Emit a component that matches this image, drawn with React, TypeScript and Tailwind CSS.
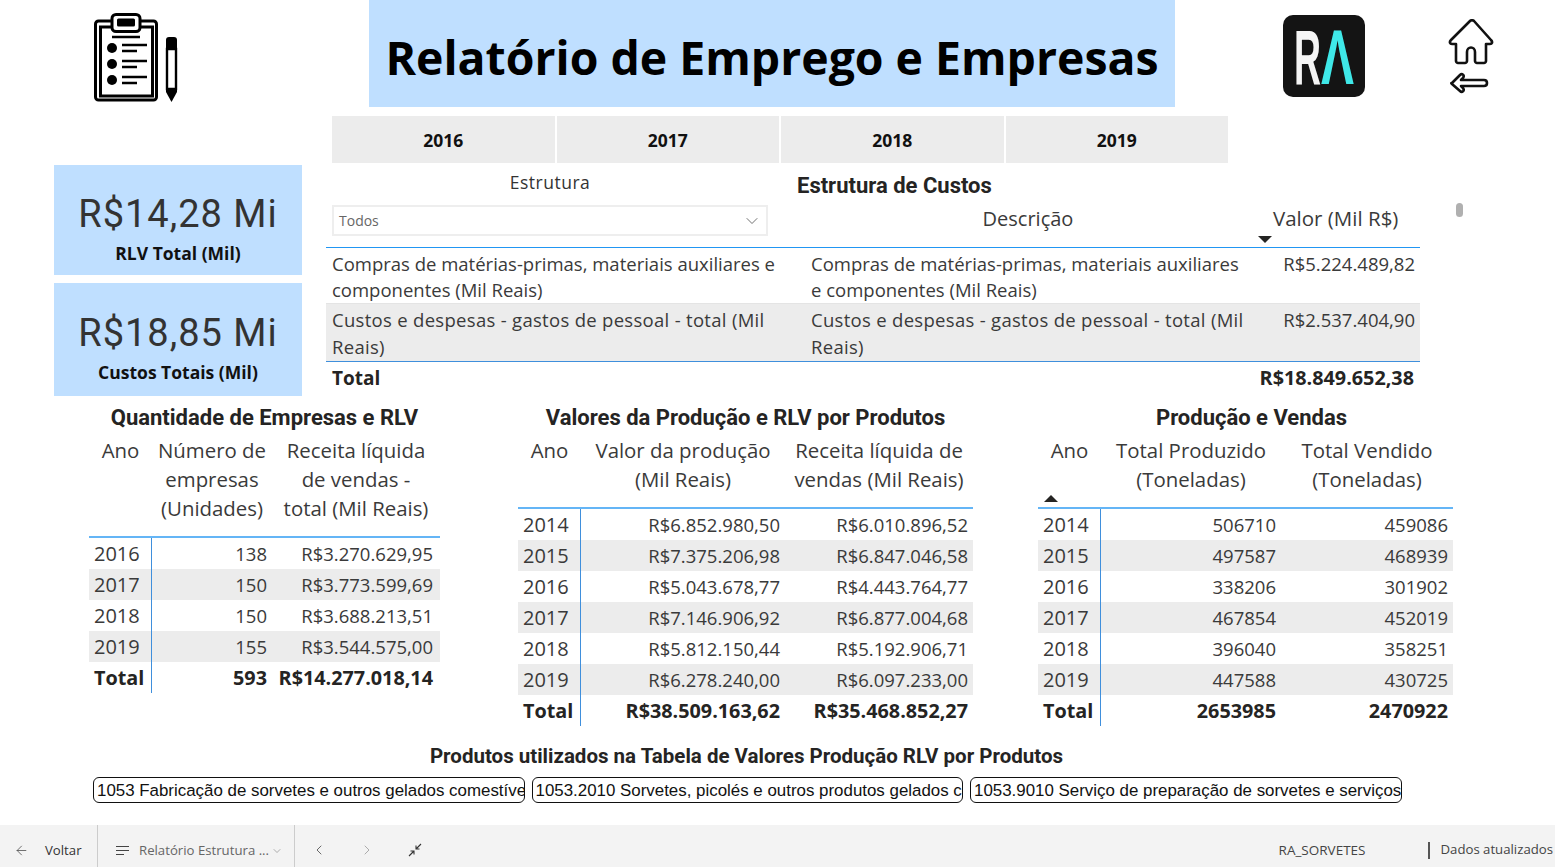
import { ArrowLeft, ChevronDown, ChevronLeft, ChevronRight } from "lucide-react"

const sans = "font-['Open_Sans',sans-serif]"
const din = "font-['Roboto',sans-serif]"

type TableProps = {
  title: string
  className: string
  titleClass?: string
  cols: string
  headH: string
  head: string[][]
  rows: string[][]
  total: string[]
  sortUp?: boolean
  lastPad?: string
}

function DataTable({ title, className, titleClass, cols, headH, head, rows, total, sortUp, lastPad }: TableProps) {
  return (
    <div className={`${className} shrink-0`}>
      <div className={`${din} h-10 pt-[2px] flex items-center justify-center text-[22px] font-bold text-[#252423] ${titleClass ?? ""}`}>{title}</div>
      <div className={`grid ${cols} ${headH} border-b-2 border-[#64b5f6] relative`}>
        {head.map((lines, i) => (
          <div key={i} className="text-center text-[20.400px] leading-[29px] text-[#3a3a3a]">
            {lines.map(l => (
              <div key={l} className="whitespace-nowrap">{l}</div>
            ))}
          </div>
        ))}
        {sortUp && (
          <div className="absolute left-[6px] bottom-[5px] w-0 h-0 border-x-[7px] border-x-transparent border-b-[7px] border-b-[#252423]" />
        )}
      </div>
      {rows.map((row, r) => (
        <div key={row[0]} className={`grid ${cols} h-[31px] items-center text-[18.5px] text-[#3a3a3a] ${r % 2 ? "bg-[#ececec]" : ""}`}>
          {row.map((cell, c) => (
            <div
              key={c}
              className={
                c === 0
                  ? "h-full flex items-center pl-[5px] text-[20px] border-r border-[#3f8fdc]"
                  : `text-right ${c === row.length - 1 && lastPad ? lastPad : "pr-[5px]"}`
              }
            >
              {cell}
            </div>
          ))}
        </div>
      ))}
      <div className={`grid ${cols} h-[31px] items-center text-[19.800px] font-bold text-[#252423]`}>
        {total.map((cell, c) => (
          <div
            key={c}
            className={
              c === 0
                ? "h-full flex items-center pl-[5px] border-r border-[#3f8fdc]"
                : `text-right whitespace-nowrap ${c === total.length - 1 && lastPad ? lastPad : "pr-[5px]"}`
            }
          >
            {cell}
          </div>
        ))}
      </div>
    </div>
  )
}

function ClipboardIcon() {
  return (
    <svg width="86" height="90" viewBox="0 0 86 90" fill="none" stroke="#000">
      <rect x="1.500" y="8" width="61" height="79" rx="3" strokeWidth="3" />
      <rect x="6.500" y="14" width="52" height="69" strokeWidth="3" />
      <rect x="18" y="1.500" width="28" height="17" rx="4" fill="#fff" strokeWidth="3" />
      <rect x="23" y="5.500" width="18" height="8" rx="1.500" fill="#000" stroke="none" />
      <path d="M18 24h28M28 32h25M28 38h15M28 48h25M28 54h15M28 64h25M28 70h15" strokeWidth="2.600" />
      <circle cx="18" cy="35" r="5" fill="#000" stroke="none" />
      <circle cx="18" cy="51" r="5" fill="#000" stroke="none" />
      <circle cx="18" cy="67" r="5" fill="#000" stroke="none" />
      <path d="M72 27c0-2 1-3 3-3h5c2 0 3 1 3 3v9H72z" fill="#000" stroke="none" />
      <path d="M73 36h9v40h-9z" strokeWidth="2.400" />
      <path d="M72 76h11v3l-5.500 10-5.500-10z" fill="#000" stroke="none" />
    </svg>
  )
}

function Logo() {
  return (
    <svg width="82" height="82" viewBox="0 0 82 82">
      <rect width="82" height="82" rx="10" fill="#141414" />
      <text x="11" y="69" fontSize="78" fontWeight="700" fontFamily="Liberation Sans" fill="#f5f5f5" textLength="27" lengthAdjust="spacingAndGlyphs">
        R
      </text>
      <text x="38" y="69" fontSize="78" fontWeight="700" fontFamily="Liberation Sans" fill="#3fe8e8" textLength="33" lengthAdjust="spacingAndGlyphs">
        Λ
      </text>
    </svg>
  )
}

function HomeBack() {
  return (
    <svg width="48" height="76" viewBox="0 0 48 76" fill="none" stroke="#111" strokeWidth="2.600" strokeLinejoin="round" strokeLinecap="round">
      <path d="M22 2 3 21c-2 2-1 4 1 4h4v17c0 1 1 2 2 2h7c1 0 2-1 2-2V33c0-6 8-6 8 0v9c0 1 1 2 2 2h7c1 0 2-1 2-2V25h4c2 0 3-2 1-4L26 2c-1-1-3-1-4 0z" />
      <path d="M4 64 12 56c2-2 5 0 3 3l-2 2h23c4 0 4 6 0 6H13l2 2c2 3-1 5-3 3l-8-7c-1-1-1-1 0-1z" />
    </svg>
  )
}

function Kpi({ value, label, h, top }: { value: string; label: string; h: string; top: string }) {
  return (
    <div className={`${h} bg-[#bfdfff] flex flex-col items-center`}>
      <div className={`${din} ${top} text-[38px] leading-[50px] tracking-[1px] text-[#333]`}>{value}</div>
      <div className="mt-[2px] text-[17.500px] leading-[24px] font-bold text-[#111]">{label}</div>
    </div>
  )
}

export default function App() {
  const years = ["2016", "2017", "2018", "2019"]

  const empresas = [
    ["2016", "138", "R$3.270.629,95"],
    ["2017", "150", "R$3.773.599,69"],
    ["2018", "150", "R$3.688.213,51"],
    ["2019", "155", "R$3.544.575,00"],
  ]
  const valores = [
    ["2014", "R$6.852.980,50", "R$6.010.896,52"],
    ["2015", "R$7.375.206,98", "R$6.847.046,58"],
    ["2016", "R$5.043.678,77", "R$4.443.764,77"],
    ["2017", "R$7.146.906,92", "R$6.877.004,68"],
    ["2018", "R$5.812.150,44", "R$5.192.906,71"],
    ["2019", "R$6.278.240,00", "R$6.097.233,00"],
  ]
  const producao = [
    ["2014", "506710", "459086"],
    ["2015", "497587", "468939"],
    ["2016", "338206", "301902"],
    ["2017", "467854", "452019"],
    ["2018", "396040", "358251"],
    ["2019", "447588", "430725"],
  ]

  return (
    <div className={`${sans} w-[1555px] h-[867px] flex flex-col bg-white overflow-hidden`}>
      {/* Header */}
      <div className="h-[107px] flex shrink-0">
        <div className="w-[369px] pl-[94px] pt-[13px]">
          <ClipboardIcon />
        </div>
        <div className="w-[806px] h-[107px] bg-[#bfdfff] flex items-center justify-center text-[46.400px] font-bold text-black pt-[8px]">
          Relatório de Emprego e Empresas
        </div>
        <div className="pl-[108px] pt-[15px]">
          <Logo />
        </div>
        <div className="pl-[83px] pt-[19px]">
          <HomeBack />
        </div>
      </div>

      {/* Year slicer */}
      <div className="mt-[9px] ml-[332px] flex gap-[2px] shrink-0">
        {years.map(y => (
          <div key={y} className="w-[222.500px] h-[47px] pt-[2px] bg-[#ececec] flex items-center justify-center text-[17.500px] font-bold text-[#111]">
            {y}
          </div>
        ))}
      </div>

      {/* KPIs + cost table */}
      <div className="mt-[2px] h-[231px] flex shrink-0">
        <div className="ml-[54px] w-[248px] flex flex-col gap-[8px]">
          <Kpi h="h-[110px]" top="mt-[24px]" value="R$14,28 Mi" label="RLV Total (Mil)" />
          <Kpi h="h-[113px]" top="mt-[25px]" value="R$18,85 Mi" label="Custos Totais (Mil)" />
        </div>

        <div className="ml-[24px] w-[1094px]">
          <div className="grid grid-cols-[479px_446px_169px] h-[83px] border-b border-[#2196f3]">
            <div className="pl-[6px]">
              <div className="h-[35px] w-[436px] flex items-center justify-center text-[17.500px] tracking-[0.5px] text-[#333]">Estrutura</div>
              <div className="mt-[5px] w-[436px] h-[31px] border-2 border-[#eeeeee] flex items-center justify-between pl-[5px] pr-[4px] text-[14px] text-[#666]">
                Todos
                <ChevronDown size={20} strokeWidth={1} className="text-[#555]" />
              </div>
            </div>
            <div>
              <div className={`${din} h-[40px] -ml-[8px] flex items-center text-[22px] font-bold text-[#252423]`}>Estrutura de Custos</div>
              <div className="text-center text-[20px] leading-[28px] text-[#3a3a3a]">Descrição</div>
            </div>
            <div className="relative pt-[39px] pl-[22px] text-[20.500px] leading-[28px] text-[#3a3a3a] whitespace-nowrap">
              Valor (Mil R$)
              <div className="absolute left-[7px] bottom-[4px] w-0 h-0 border-x-[7px] border-x-transparent border-t-[7px] border-t-[#252423]" />
            </div>
          </div>

          <div className="grid grid-cols-[479px_446px_169px] h-[56px] text-[18.500px] leading-[26px] text-[#3a3a3a] border-b border-[#e4e4e4]">
            <div className="pl-[6px] pt-[3px] pr-[2px]">Compras de matérias-primas, materiais auxiliares e componentes (Mil Reais)</div>
            <div className="pl-[6px] pt-[3px]">Compras de matérias-primas, materiais auxiliares e componentes (Mil Reais)</div>
            <div className="text-right pr-[5px] pt-[3px]">R$5.224.489,82</div>
          </div>
          <div className="grid grid-cols-[479px_446px_169px] h-[58px] bg-[#ececec] text-[18.500px] leading-[27px] text-[#3a3a3a] border-b border-[#3f8fdc]">
            <div className="pl-[6px] pt-[2px] tracking-[0.3px]">Custos e despesas - gastos de pessoal - total (Mil Reais)</div>
            <div className="pl-[6px] pt-[2px] tracking-[0.3px]">Custos e despesas - gastos de pessoal - total (Mil Reais)</div>
            <div className="text-right pr-[5px] pt-[2px]">R$2.537.404,90</div>
          </div>
          <div className="flex justify-between items-center h-[32px] px-[6px] text-[19.800px] font-bold text-[#252423]">
            <span className="text-[19px]">Total</span>
            <span>R$18.849.652,38</span>
          </div>
        </div>

        <div className="ml-[36px] mt-[38px] w-[7px] h-[14px] rounded bg-[#b0b0b0]" />
      </div>

      {/* Three tables */}
      <div className="h-[345px] flex pl-[89px] shrink-0">
        <DataTable
          title="Quantidade de Empresas e RLV"
          className="w-[351px]"
          cols="grid-cols-[63px_120px_168px]"
          headH="h-[102px]"
          head={[["Ano"], ["Número de", "empresas", "(Unidades)"], ["Receita líquida", "de vendas -", "total (Mil Reais)"]]}
          rows={empresas}
          total={["Total", "593", "R$14.277.018,14"]}
          lastPad="pr-[7px]"
        />
        <DataTable
          title="Valores da Produção e RLV por Produtos"
          className="w-[455px] ml-[78px]"
          cols="grid-cols-[63px_204px_188px]"
          headH="h-[73px]"
          head={[["Ano"], ["Valor da produção", "(Mil Reais)"], ["Receita líquida de", "vendas (Mil Reais)"]]}
          rows={valores}
          total={["Total", "R$38.509.163,62", "R$35.468.852,27"]}
        />
        <DataTable
          title="Produção e Vendas"
          className="w-[415px] ml-[65px]"
          titleClass="pl-[12px]"
          cols="grid-cols-[63px_180px_172px]"
          headH="h-[73px]"
          head={[["Ano"], ["Total Produzido", "(Toneladas)"], ["Total Vendido", "(Toneladas)"]]}
          rows={producao}
          total={["Total", "2653985", "2470922"]}
          sortUp
        />
      </div>

      {/* Products */}
      <div className={`${din} h-[30px] flex items-center justify-center text-[20.500px] font-bold text-[#252423] shrink-0 ml-[138px] w-[1217px]`}>
        Produtos utilizados na Tabela de Valores Produção RLV por Produtos
      </div>
      <div className="mt-[6px] ml-[93px] flex gap-[7px] font-['Liberation_Sans',sans-serif] text-[16.900px] text-[#111] shrink-0">
        {[
          "1053 Fabricação de sorvetes e outros gelados comestíveis",
          "1053.2010 Sorvetes, picolés e outros produtos gelados comestíveis",
          "1053.9010 Serviço de preparação de sorvetes e serviços",
        ].map(p => (
          <div key={p} className="w-[431.500px] h-[26px] border border-[#111] rounded-[6px] pl-[3px] leading-[25px] whitespace-nowrap overflow-hidden">
            {p}
          </div>
        ))}
      </div>

      {/* Power BI footer */}
      <div className="mt-auto h-[42px] bg-[#f3f3f3] flex items-center text-[13.200px] text-[#444] shrink-0">
        <div className="w-[98px] h-full flex items-center pl-[14px] pt-[9px] border-r border-[#cccccc]">
          <ArrowLeft size={15} strokeWidth={1.2} />
          <span className="ml-[16px] text-[#333]">Voltar</span>
        </div>
        <div className="w-[197px] h-full flex items-center pl-[18px] pt-[9px] border-r border-[#cccccc] text-[#666]">
          <svg width="13" height="10" viewBox="0 0 13 10" stroke="#444" strokeWidth="1">
            <path d="M0 .5h13M0 4.500h13M0 8.500h8" />
          </svg>
          <span className="ml-[10px] whitespace-nowrap">Relatório Estrutura ...</span>
          <ChevronDown size={12} strokeWidth={1} className="ml-[2px]" />
        </div>
        <ChevronLeft size={16} strokeWidth={1.2} className="ml-[16px] mt-[8px]" />
        <ChevronRight size={16} strokeWidth={1.2} className="ml-[32px] mt-[8px] text-[#999]" />
        <svg width="14" height="14" viewBox="0 0 14 14" fill="none" stroke="#333" strokeWidth="1.100" className="ml-[33px] mt-[8px]">
          <path d="M13 1 8 6M8 2.500V6h3.500M1 13l5-5M6 11.500V8H2.500" />
        </svg>
        <span className="ml-auto mt-[8px] text-[13.500px] text-[#444]">RA_SORVETES</span>
        <div className="ml-[63px] mt-[8px] w-[2px] h-[17px] bg-[#555]" />
        <span className="ml-[10px] mr-[2px] mt-[8px] whitespace-nowrap">Dados atualizados</span>
      </div>
    </div>
  )
}
